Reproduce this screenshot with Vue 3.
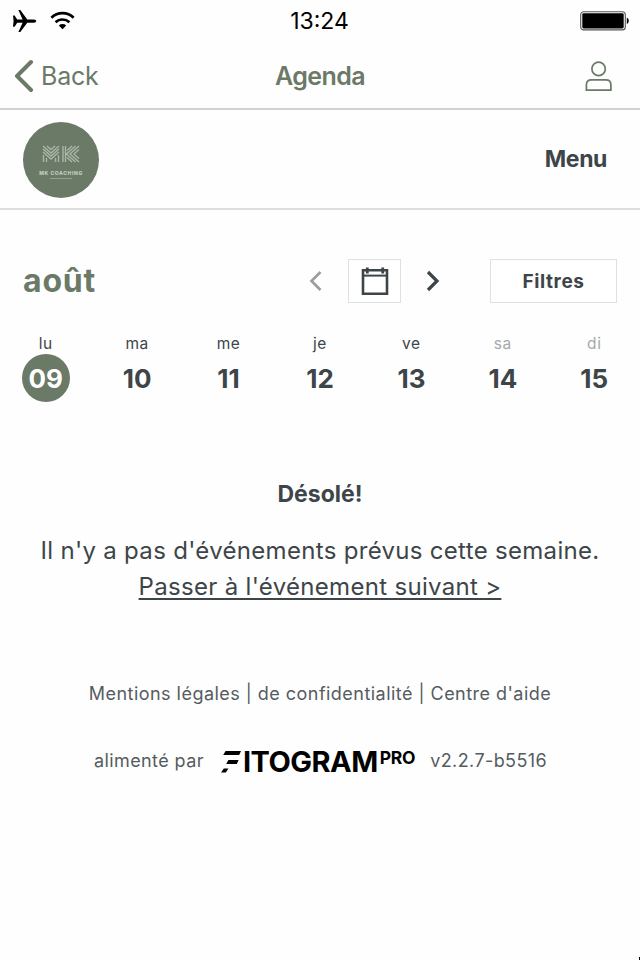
<!-- src/App.vue -->
<script setup>
import { ref } from 'vue'

const days = [
  { name: 'lu', date: '09' },
  { name: 'ma', date: '10' },
  { name: 'me', date: '11' },
  { name: 'je', date: '12' },
  { name: 've', date: '13' },
  { name: 'sa', date: '14', weekend: true },
  { name: 'di', date: '15', weekend: true }
]

const selected = ref('09')
</script>

<template>
  <div class="screen">
    <div class="status-bar">
      <div class="signals">
        <svg class="plane" width="25" height="24" viewBox="0 0 25 24">
          <path d="M1 6.5h1.6l2.6 4h5.4L6.4 1h1.9l7 9.5h6.4q2.6 0 2.6 1.6t-2.6 1.6h-6.4l-7 9.3H6.4l4.2-9.3H5.2l-2.6 4H1l.6-5.6z" />
        </svg>
        <svg class="wifi" width="25" height="20" viewBox="0 0 25 20">
          <path d="M1.4 6.7a16 16 0 0 1 22.2 0" fill="none" stroke="#000" stroke-width="2.8" />
          <path d="M5.6 11.2a10 10 0 0 1 13.8 0" fill="none" stroke="#000" stroke-width="2.6" />
          <path d="M8.8 14.4a5.4 5.4 0 0 1 7.4 0l-3.7 3.8z" />
        </svg>
      </div>
      <span class="clock">13:24</span>
      <svg class="battery" width="50" height="20" viewBox="0 0 50 20">
        <rect x="0.7" y="0.7" width="44.6" height="18.2" rx="3" fill="none" stroke="#555" stroke-width="1.1" />
        <rect x="2.3" y="2.2" width="41.4" height="15.2" rx="1.4" />
        <path d="M46.8 6.6q2 .8 2 3.2t-2 3.2z" />
      </svg>
    </div>

    <nav class="nav-bar">
      <a class="back">
        <svg width="20" height="34" viewBox="0 0 20 34">
          <path d="M18 3L4 17l14 14" fill="none" stroke="#6b7967" stroke-width="4" stroke-linecap="round" stroke-linejoin="round" />
        </svg>
        <span>Back</span>
      </a>
      <h1>Agenda</h1>
      <svg class="user" width="28" height="31" viewBox="0 0 28 31">
        <g fill="none" stroke="#6b7967" stroke-width="1.7">
          <circle cx="14.6" cy="7.9" r="6.7" />
          <path d="M2.4 29.2v-5.4q0-5 5-5h14.5q5 0 5 5v5.4z" />
        </g>
      </svg>
    </nav>

    <header class="site-header">
      <div class="logo">
        <svg width="38" height="18" viewBox="0 0 38 18">
          <g fill="none" stroke="#a9b7a8" stroke-width="1.4">
            <path d="M1 1l8 7 8-7M1 4l8 7 8-7M1 7l8 7 8-7M5 1l4 3.5L13 1M1.5 10v7M4.5 13v4M13.5 13v4M16.5 10v7" />
            <path d="M21 1v16M23.5 1v16M37 1l-9 8 9 8M33.5 1l-9 8 9 8M30 1l-5 4.5M30 17l-5-4.5M37 4.5L32 9l5 4.5" />
          </g>
        </svg>
        <span class="logo-name">MK COACHING</span>
        <span class="logo-line"></span>
      </div>
      <span class="menu">Menu</span>
    </header>

    <section class="toolbar">
      <h2>août</h2>
      <svg class="prev" width="14" height="22" viewBox="0 0 14 22">
        <path d="M12.5 2l-9 9 9 9" fill="none" stroke="#9b9e9f" stroke-width="2.7" />
      </svg>
      <button class="calendar">
        <svg width="28" height="29" viewBox="0 0 28 29">
          <g fill="none" stroke="#3d4549">
            <path d="M2 3.2h24v23.6H2z" stroke-width="2.6" />
            <path d="M2 8.6h24" stroke-width="2" />
            <path d="M6.3 .5v6M21.7 .5v6" stroke-width="2.8" />
          </g>
        </svg>
      </button>
      <svg class="next" width="14" height="22" viewBox="0 0 14 22">
        <path d="M2 2l9 9-9 9" fill="none" stroke="#3d4549" stroke-width="3.2" />
      </svg>
      <button class="filters">Filtres</button>
    </section>

    <section class="week">
      <div v-for="day in days" :key="day.date" class="day" @click="selected = day.date">
        <span class="day-name" :class="{ weekend: day.weekend }">{{ day.name }}</span>
        <span class="day-date" :class="{ active: selected === day.date }">{{ day.date }}</span>
      </div>
    </section>

    <section class="empty">
      <h3>Désolé!</h3>
      <p>Il n'y a pas d'événements prévus cette semaine.</p>
      <a>Passer à l'événement suivant &gt;</a>
    </section>

    <footer>
      <div class="links">Mentions légales | de confidentialité | Centre d'aide</div>
      <div class="powered">
        <span class="by">alimenté par</span>
        <span class="brand">
          <svg width="21" height="22" viewBox="0 0 21 22">
            <path d="M4.6 0H20l-1.8 4H2.2zM7.4 9h10.2l-1.8 4H5.2zM2.8 17.5h4.6L4.8 21.5H0z" />
          </svg>
          <span class="brand-name">ITOGRAM</span>
          <span class="brand-pro">PRO</span>
        </span>
        <span class="version">v2.2.7-b5516</span>
      </div>
    </footer>
    <span class="corner"></span>
  </div>
</template>

<style>
body { background: #fefefe; }
</style>

<style scoped>
.screen { position: relative; width: 640px; height: 960px; overflow: hidden; background: #fefefe; color: #3d4549; font-family: Inter, "Liberation Sans", sans-serif; white-space: nowrap; }
h1, h2, h3, p { margin: 0; }
button { padding: 0; box-sizing: border-box; background: #fff; border: 1.5px solid #dfe0e0; color: inherit; font-family: inherit; }
svg { display: block; flex: none; }

.status-bar { display: grid; grid-template-columns: 1fr auto 1fr; align-items: center; height: 42px; color: #000; }
.signals { display: flex; align-items: center; padding-left: 12px; gap: 13px; }
.clock { font-size: 23px; line-height: 42px; margin-left: -1px; }
.battery { justify-self: end; margin-right: 10px; }

.nav-bar { display: grid; grid-template-columns: 1fr auto 1fr; align-items: center; box-sizing: border-box; height: 68px; padding-top: 2px; border-bottom: 2px solid #d2d2d2; color: #6b7967; }
.back { display: flex; align-items: center; padding-left: 13px; gap: 8px; font-size: 25px; letter-spacing: -0.2px; }
h1 { font-size: 25px; font-weight: 600; letter-spacing: -0.6px; }
.user { justify-self: end; margin-right: 28px; }

.site-header { display: flex; align-items: center; justify-content: space-between; box-sizing: border-box; height: 100px; padding: 0 33px 0 23px; border-bottom: 2px solid #dedede; }
.logo { display: flex; flex-direction: column; align-items: center; box-sizing: border-box; width: 76px; height: 76px; padding-top: 23px; margin-top: 2px; border-radius: 50%; background: #6b7967; }
.logo-name { margin-top: 7px; font-size: 5px; line-height: 7px; font-weight: 800; letter-spacing: 0.6px; color: #c3cec2; }
.logo-line { width: 22px; height: 1px; margin-top: 1px; background: #93a091; }
.menu { font-size: 23px; font-weight: 700; letter-spacing: -0.4px; }

.toolbar { display: flex; align-items: center; height: 44px; margin-top: 49px; padding: 0 23px; }
h2 { width: 285px; font-size: 32px; line-height: 40px; font-weight: 700; letter-spacing: 0.8px; color: #6b7967; }
.calendar { display: flex; align-items: center; justify-content: center; width: 53px; height: 44px; margin: 0 25px 0 26px; }
.filters { width: 127px; height: 44px; margin-left: auto; font-size: 19px; font-weight: 700; letter-spacing: 0.6px; }

.week { display: grid; grid-template-columns: repeat(7, 1fr); margin-top: 30px; }
.day { display: flex; flex-direction: column; align-items: center; }
.day-name { font-size: 15.5px; line-height: 21px; letter-spacing: 0.6px; }
.day-name.weekend { color: #a5a9aa; }
.day-date { width: 48px; height: 48px; border-radius: 50%; text-align: center; font-size: 26px; line-height: 50px; font-weight: 700; }
.day-date.active { background: #6b7967; color: #fff; }

.empty { display: flex; flex-direction: column; align-items: center; margin-top: 74px; font-size: 24px; line-height: 36px; letter-spacing: 0.31px; }
h3 { font-size: 23px; font-weight: 700; line-height: 36px; letter-spacing: 0; }
.empty p { margin-top: 21px; }
.empty a { text-decoration: underline; text-decoration-thickness: 1.5px; text-underline-offset: 3px; text-decoration-skip-ink: none; }

.links { margin-top: 77px; font-size: 18px; line-height: 24px; letter-spacing: 0.47px; text-align: center; color: #555c60; }
.powered { display: flex; align-items: center; height: 30px; margin-top: 39px; padding-left: 94px; font-size: 18px; letter-spacing: 0.4px; color: #555c60; }
.brand { display: flex; align-items: flex-start; height: 22px; margin: 3px 15px 0 17px; letter-spacing: 0; color: #000; }
.brand-name { margin-left: 1px; font-size: 29px; line-height: 22px; font-weight: 700; letter-spacing: -0.5px; }
.brand-pro { margin-left: 2px; font-size: 17.5px; line-height: 14px; font-weight: 700; letter-spacing: -0.3px; }

.corner { position: absolute; right: 0; bottom: 0; width: 1px; height: 3px; background: #000; }
</style>
